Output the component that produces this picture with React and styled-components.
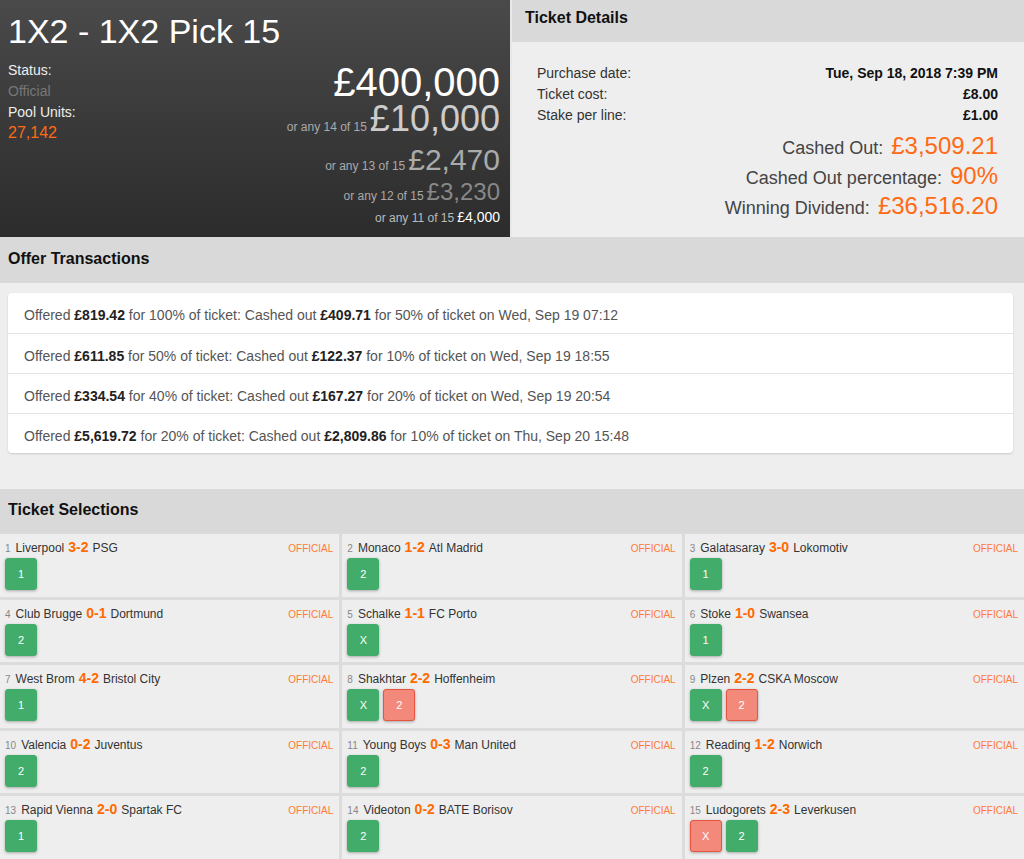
import React from "react";
import styled, { createGlobalStyle } from "styled-components";

const GlobalStyle = createGlobalStyle`
  html, body { margin: 0; padding: 0; }
  body {
    background: #eeeeee;
    font-family: "Liberation Sans", Arial, Helvetica, sans-serif;
    color: #333;
  }
  * { box-sizing: border-box; }
`;

const Page = styled.div`
  width: 1024px;
  overflow: hidden;
`;

const Top = styled.div`
  display: grid;
  grid-template-columns: 510px 1fr;
  column-gap: 2px;
  height: 237px;
  background: #e8e8e8;
`;

const Hero = styled.div`
  background: linear-gradient(to bottom, #4a4a4a 0%, #3a3a3a 50%, #2c2c2c 100%);
  padding: 11px 10px 0 8px;
  color: #fff;
`;

const HeroTitle = styled.div`
  font-size: 34px;
  line-height: 40px;
  color: #fff;
  white-space: nowrap;
`;

const HeroBody = styled.div`
  display: flex;
  justify-content: space-between;
`;

const InfoCol = styled.div`
  padding-top: 9px;
  display: flex;
  flex-direction: column;
`;

const InfoLabel = styled.div`
  font-size: 14px;
  line-height: 20px;
  color: #eeeeee;
`;

const InfoValue = styled.div`
  font-size: ${(p) => p.$size || 14}px;
  line-height: 22px;
  color: ${(p) => p.$color};
`;

const PrizeCol = styled.div`
  padding-top: 11px;
  display: flex;
  flex-direction: column;
  align-items: flex-end;
`;

const PrizeRow = styled.div`
  display: flex;
  align-items: baseline;
  justify-content: flex-end;
  gap: 3px;
  height: ${(p) => p.$lh}px;
  line-height: ${(p) => p.$lh}px;
  white-space: nowrap;
`;

const PrizeNote = styled.span`
  display: inline-block;
  font-size: 12px;
  line-height: 14px;
  color: ${(p) => p.$color || "#aaaaaa"};
`;

const PrizeAmount = styled.span`
  display: inline-block;
  height: ${(p) => p.$lh}px;
  line-height: ${(p) => p.$lh}px;
  font-size: ${(p) => p.$size}px;
  color: ${(p) => p.$color};
`;

const Details = styled.div`
  background: #eeeeee;
  display: flex;
  flex-direction: column;
`;

const SectionHeader = styled.div`
  background: #d9d9d9;
  height: ${(p) => p.$h || 44}px;
  padding: ${(p) => p.$pt || 11}px ${(p) => p.$pl || 8}px 0;
  font-size: 16px;
  line-height: 20px;
  font-weight: bold;
  color: #111;
`;

const DetailsBody = styled.div`
  padding: 21px 26px 0 25px;
`;

const DetailLine = styled.div`
  display: flex;
  justify-content: space-between;
  font-size: 14px;
  line-height: 21px;
  color: #333;
`;

const DetailValue = styled.span`
  font-weight: bold;
  color: #111;
`;

const Totals = styled.div`
  margin-top: 6px;
  text-align: right;
`;

const TotalLine = styled.div`
  font-size: 18px;
  line-height: 28px;
  color: #444;
`;

const TotalValue = styled.span`
  font-size: 24px;
  line-height: 28px;
  color: #ff6a14;
  margin-left: 8px;
`;

const OfferBody = styled.div`
  padding: 10px 11px 36px 8px;
`;

const Card = styled.div`
  background: #fff;
  border-radius: 4px;
  box-shadow: 0 1px 2px rgba(0, 0, 0, 0.15);
  overflow: hidden;
`;

const OfferRow = styled.div`
  height: 40px;
  line-height: 36px;
  padding: 4px 16px 0;
  font-size: 14px;
  color: #555;
  & + & {
    border-top: 1px solid #e4e4e4;
  }
  b {
    color: #222;
  }
`;

const Grid = styled.div`
  display: grid;
  grid-template-columns: repeat(3, 1fr);
  grid-auto-rows: 62.5px;
  gap: 3px;
  padding-top: 1px;
  background: #dcdcdc;
`;

const Cell = styled.div`
  background: #eeeeee;
  padding: 4px 6px 0 5px;
`;

const CellHead = styled.div`
  display: flex;
  align-items: baseline;
  height: 18px;
  line-height: 18px;
  white-space: nowrap;
`;

const Num = styled.span`
  font-size: 10px;
  color: #888;
  margin-right: 5px;
`;

const Team = styled.span`
  font-size: 12px;
  color: #333;
`;

const Score = styled.span`
  font-size: 14px;
  font-weight: bold;
  color: #ff6a00;
  margin: 0 4px;
`;

const Status = styled.span`
  margin-left: auto;
  font-size: 10px;
  color: #ff7a36;
`;

const Picks = styled.div`
  display: flex;
  gap: 4px;
  margin-top: 2px;
`;

const Pick = styled.div`
  width: 32px;
  height: 32px;
  border-radius: 3px;
  display: flex;
  align-items: center;
  justify-content: center;
  font-size: 11px;
  color: #fff;
  background: ${(p) => (p.$lost ? "#f2897a" : "#42ac6a")};
  border: 1px solid ${(p) => (p.$lost ? "#e5553f" : "#42ac6a")};
  box-shadow: 0 1px 3px rgba(0, 0, 0, 0.3);
`;

const prizes = [
  { note: null, amount: "£400,000", size: 40, color: "#ffffff", lh: 40 },
  { note: "or any 14 of 15", amount: "£10,000", size: 36, color: "#cccccc", lh: 34 },
  { note: "or any 13 of 15", amount: "£2,470", size: 30, color: "#aaaaaa", lh: 47 },
  { note: "or any 12 of 15", amount: "£3,230", size: 24, color: "#888888", lh: 17 },
  { note: "or any 11 of 15", amount: "£4,000", size: 14, color: "#ffffff", lh: 34, noteColor: "#bbbbbb" },
];

const offers = [
  ["£819.42", "100%", "£409.71", "50%", "Wed, Sep 19 07:12"],
  ["£611.85", "50%", "£122.37", "10%", "Wed, Sep 19 18:55"],
  ["£334.54", "40%", "£167.27", "20%", "Wed, Sep 19 20:54"],
  ["£5,619.72", "20%", "£2,809.86", "10%", "Thu, Sep 20 15:48"],
];

const G = (t) => ({ t, lost: false });
const R = (t) => ({ t, lost: true });

const selections = [
  ["Liverpool", "3-2", "PSG", [G("1")]],
  ["Monaco", "1-2", "Atl Madrid", [G("2")]],
  ["Galatasaray", "3-0", "Lokomotiv", [G("1")]],
  ["Club Brugge", "0-1", "Dortmund", [G("2")]],
  ["Schalke", "1-1", "FC Porto", [G("X")]],
  ["Stoke", "1-0", "Swansea", [G("1")]],
  ["West Brom", "4-2", "Bristol City", [G("1")]],
  ["Shakhtar", "2-2", "Hoffenheim", [G("X"), R("2")]],
  ["Plzen", "2-2", "CSKA Moscow", [G("X"), R("2")]],
  ["Valencia", "0-2", "Juventus", [G("2")]],
  ["Young Boys", "0-3", "Man United", [G("2")]],
  ["Reading", "1-2", "Norwich", [G("2")]],
  ["Rapid Vienna", "2-0", "Spartak FC", [G("1")]],
  ["Videoton", "0-2", "BATE Borisov", [G("2")]],
  ["Ludogorets", "2-3", "Leverkusen", [R("X"), G("2")]],
];

export default function App() {
  return (
    <Page>
      <GlobalStyle />
      <Top>
        <Hero>
          <HeroTitle>1X2 - 1X2 Pick 15</HeroTitle>
          <HeroBody>
            <InfoCol>
              <InfoLabel>Status:</InfoLabel>
              <InfoValue $color="#777777">Official</InfoValue>
              <InfoLabel>Pool Units:</InfoLabel>
              <InfoValue $color="#ff6a14" $size={16}>27,142</InfoValue>
            </InfoCol>
            <PrizeCol>
              {prizes.map((p) => (
                <PrizeRow key={p.amount} $lh={p.lh}>
                  {p.note && <PrizeNote $color={p.noteColor}>{p.note}</PrizeNote>}
                  <PrizeAmount $size={p.size} $color={p.color} $lh={p.lh}>{p.amount}</PrizeAmount>
                </PrizeRow>
              ))}
            </PrizeCol>
          </HeroBody>
        </Hero>
        <Details>
          <SectionHeader $h={42} $pt={8} $pl={13}>Ticket Details</SectionHeader>
          <DetailsBody>
            <DetailLine>
              <span>Purchase date:</span>
              <DetailValue>Tue, Sep 18, 2018 7:39 PM</DetailValue>
            </DetailLine>
            <DetailLine>
              <span>Ticket cost:</span>
              <DetailValue>£8.00</DetailValue>
            </DetailLine>
            <DetailLine>
              <span>Stake per line:</span>
              <DetailValue>£1.00</DetailValue>
            </DetailLine>
            <Totals>
              <TotalLine>
                Cashed Out:<TotalValue>£3,509.21</TotalValue>
              </TotalLine>
              <TotalLine>
                Cashed Out percentage:<TotalValue>90%</TotalValue>
              </TotalLine>
              <TotalLine>
                Winning Dividend:<TotalValue>£36,516.20</TotalValue>
              </TotalLine>
            </Totals>
          </DetailsBody>
        </Details>
      </Top>

      <SectionHeader $h={46} $pt={12}>Offer Transactions</SectionHeader>
      <OfferBody>
        <Card>
          {offers.map((o) => (
            <OfferRow key={o[0]}>
              Offered <b>{o[0]}</b> for {o[1]} of ticket: Cashed out <b>{o[2]}</b> for {o[3]} of ticket on {o[4]}
            </OfferRow>
          ))}
        </Card>
      </OfferBody>

      <SectionHeader $h={44} $pt={11}>Ticket Selections</SectionHeader>
      <Grid>
        {selections.map(([home, score, away, picks], i) => (
          <Cell key={home}>
            <CellHead>
              <Num>{i + 1}</Num>
              <Team>{home}</Team>
              <Score>{score}</Score>
              <Team>{away}</Team>
              <Status>OFFICIAL</Status>
            </CellHead>
            <Picks>
              {picks.map((p, j) => (
                <Pick key={j} $lost={p.lost}>{p.t}</Pick>
              ))}
            </Picks>
          </Cell>
        ))}
      </Grid>
    </Page>
  );
}
